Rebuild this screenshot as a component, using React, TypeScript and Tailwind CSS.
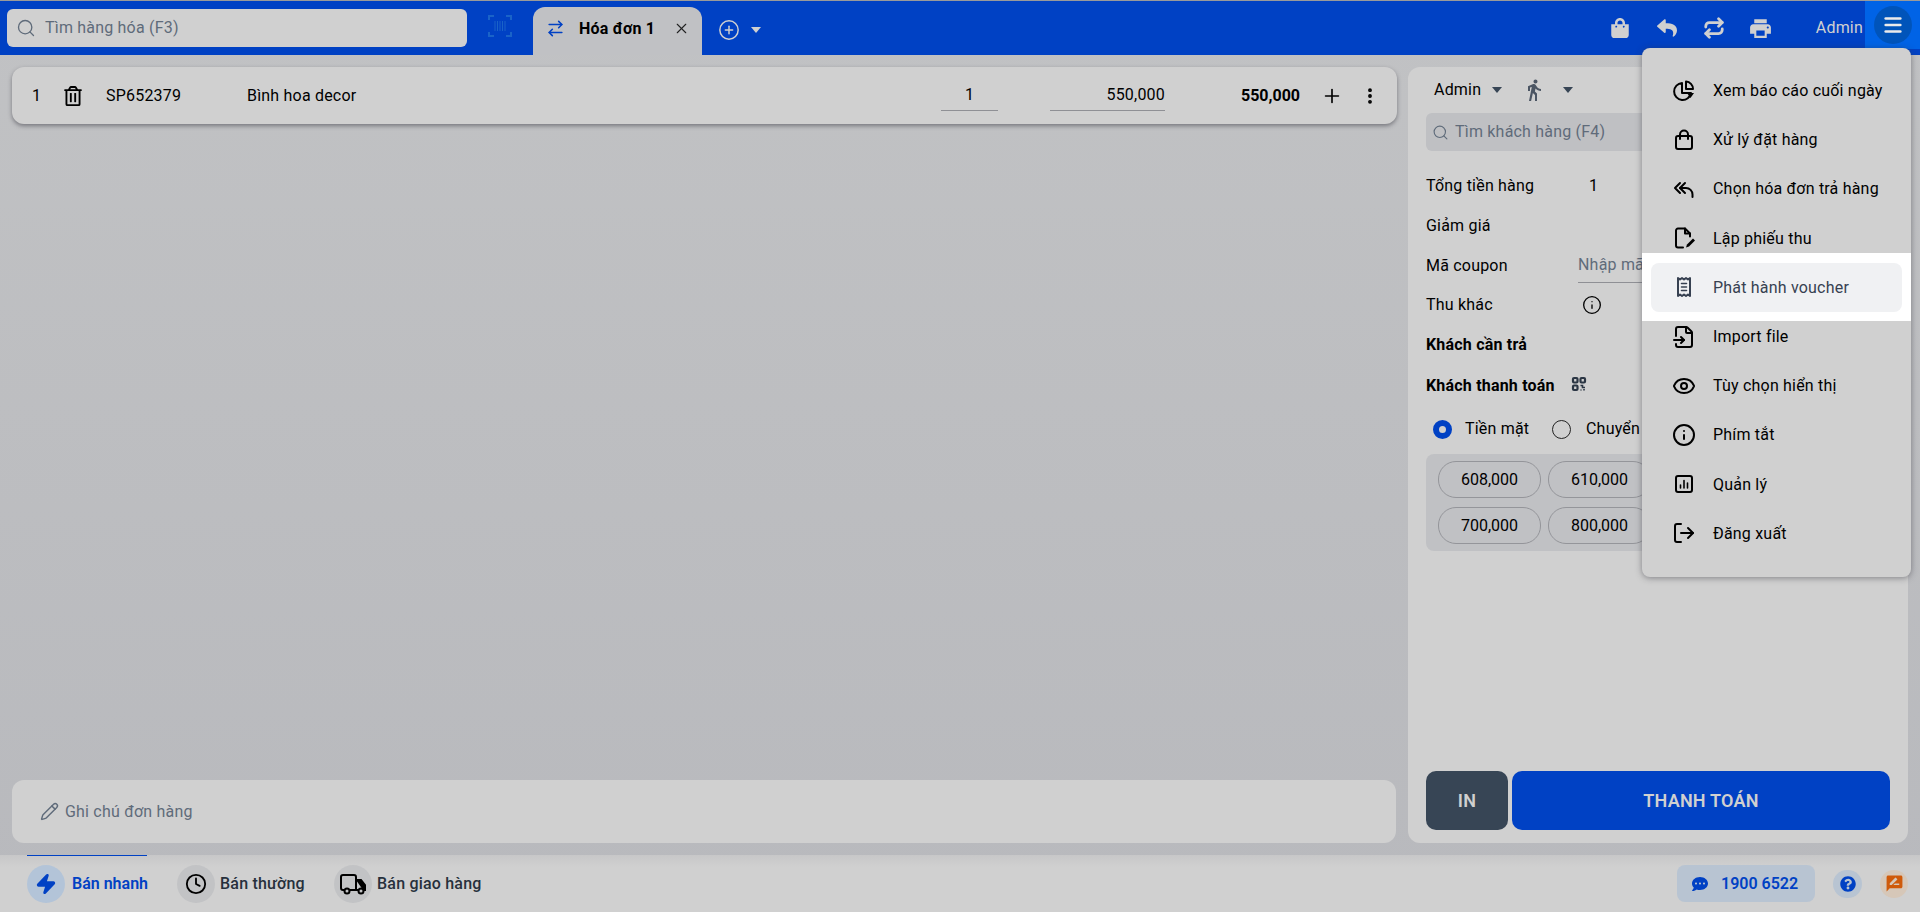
import {
  ArrowLeftRight,
  CirclePlus,
  Clock,
  EllipsisVertical,
  Eye,
  FileInput,
  Info,
  LogOut,
  Menu,
  Pencil,
  Plus,
  Repeat,
  Search,
  X,
  Zap,
} from "lucide-react";
import { FaCommentDots, FaQuestionCircle, FaRegTrashAlt, FaReply, FaShoppingBag } from "react-icons/fa";
import { MdDirectionsWalk, MdPrint, MdRateReview } from "react-icons/md";

const Caret = ({ className = "" }: { className?: string }) => (
  <span className={`inline-block w-0 h-0 border-x-[5px] border-x-transparent border-t-[6px] ${className}`} />
);

const Glyph = ({ children, size = 24 }: { children: React.ReactNode; size?: number }) => (
  <svg width={size} height={size} viewBox="0 0 24 24" fill="none" stroke="currentColor" strokeWidth="2" strokeLinecap="round" strokeLinejoin="round">
    {children}
  </svg>
);

const menuItems = [
  {
    label: "Xem báo cáo cuối ngày",
    icon: (
      <Glyph>
        <path d="M10 4a8.5 8.5 0 1 0 9 10h-9z" />
        <path d="M14 2.5a7.5 7.5 0 0 1 7 7.5h-7z" />
        <path d="M15 14h7l-3.5 5z" fill="currentColor" stroke="none" />
      </Glyph>
    ),
  },
  {
    label: "Xử lý đặt hàng",
    icon: (
      <Glyph>
        <rect x="4" y="8" width="16" height="13" rx="2" />
        <path d="M8 11V6.5a4 4 0 0 1 8 0V11" />
      </Glyph>
    ),
  },
  {
    label: "Chọn hóa đơn trả hàng",
    icon: (
      <Glyph>
        <path d="M8 6l-5 5 5 5M13 6l-5 5 5 5" />
        <path d="M8 11h6a6.5 6.5 0 0 1 6.5 6.5V20" />
      </Glyph>
    ),
  },
  {
    label: "Lập phiếu thu",
    icon: (
      <Glyph>
        <path d="M11 21.5H6a2 2 0 0 1-2-2v-15a2 2 0 0 1 2-2h7l5 5v3" />
        <path d="M13 2.5v5h5" />
        <path d="M14 21.5l1-3 6-6 2 2-6 6z" fill="currentColor" stroke="none" />
      </Glyph>
    ),
  },
  {
    label: "Phát hành voucher",
    active: true,
    icon: (
      <Glyph>
        <path d="M6 3l2 1.5L10 3l2 1.5L14 3l2 1.5L18 3v18l-2-1.5-2 1.5-2-1.5-2 1.5-2-1.5L6 21z" />
        <path d="M9.5 8.5h5M9.5 12h5M9.5 15.5h5" strokeWidth="1.6" />
      </Glyph>
    ),
  },
  { label: "Import file", icon: <FileInput size={24} strokeWidth={2} /> },
  { label: "Tùy chọn hiển thị", icon: <Eye size={24} strokeWidth={2} /> },
  { label: "Phím tắt", icon: <Info size={24} strokeWidth={2} /> },
  {
    label: "Quản lý",
    icon: (
      <Glyph>
        <rect x="4" y="4" width="16" height="16" rx="2" />
        <path d="M8.5 16v-3M12 16V8.5M15.5 16v-5" strokeWidth="1.6" />
      </Glyph>
    ),
  },
  { label: "Đăng xuất", icon: <LogOut size={24} strokeWidth={2} /> },
];

function Header() {
  return (
    <header className="h-[55px] shrink-0 flex bg-[#0041c4] border-t border-[#9a9a9a] pl-[7px]">
      <div className="w-[460px] h-[38px] mt-2 rounded-md bg-[#d0d0d0] flex items-center pl-[9px] gap-[9px] text-[#5f6b7a]">
        <Search size={20} strokeWidth={1.6} />
        <span>Tìm hàng hóa (F3)</span>
      </div>
      <div className="ml-[19px] mt-[11px] h-[30px] text-[#1a63c8]">
        <svg width="28" height="28" viewBox="0 0 28 28" fill="none" stroke="currentColor" strokeWidth="2">
          <path d="M3 8V4h5M20 4h5v4M25 20v4h-5M8 24H3v-4" />
          <path d="M9 9v10M11.5 9v10M14 9v10M16.5 9v10M19 9v10" strokeWidth="1" />
        </svg>
      </div>
      <div className="ml-[19px] mt-[6px] w-[169px] h-[48px] bg-[#c0c1c4] rounded-t-xl flex items-center pl-[13px] pb-[5px]">
        <ArrowLeftRight size={19} strokeWidth={2} className="text-[#0041c4] -scale-x-100" />
        <span className="ml-[14px] font-bold text-black">Hóa đơn 1</span>
        <X size={17} strokeWidth={1.5} className="ml-[18px] text-[#222]" />
      </div>
      <div className="ml-[16px] flex items-center h-[54px] pt-[4px] text-[#d0d0d0]">
        <CirclePlus size={22} strokeWidth={1.6} />
        <Caret className="ml-[11px] border-t-[#d0d0d0]" />
      </div>
      <div className="ml-auto flex h-[54px] items-center text-[#d0d0d0]">
        <FaShoppingBag size={20} />
        <FaReply size={20} className="ml-[27px]" />
        <Repeat size={22} strokeWidth={3} className="ml-[26px]" />
        <MdPrint size={25} className="ml-[23px]" />
        <span className="ml-[43px]">Admin</span>
      </div>
      <div className="ml-[2px] w-[55px] h-[48px] bg-[#0063e6] flex items-center justify-center self-start">
        <span className="w-[38px] h-[38px] rounded-full bg-[#0054ba] flex items-center justify-center text-[#ebebeb]">
          <Menu size={22} strokeWidth={2.8} />
        </span>
      </div>
    </header>
  );
}

function CartRow() {
  return (
    <div className="h-[57px] rounded-xl bg-[#d0d0d0] shadow-[0_2px_4px_rgba(60,60,70,0.55)] flex items-center text-black">
      <span className="w-[20px] ml-[20px]">1</span>
      <FaRegTrashAlt size={20} className="ml-[11px]" />
      <span className="w-[141px] ml-[23px]">SP652379</span>
      <span className="w-[694px]">Bình hoa decor</span>
      <div className="w-[57px] h-[32px] text-center leading-[32px] border-b border-[#8f9095] mt-[-1px]">1</div>
      <div className="w-[115px] ml-[52px] h-[32px] text-right leading-[32px] border-b border-[#8f9095] mt-[-1px]">550,000</div>
      <span className="w-[135px] text-right font-bold tracking-normal">550,000</span>
      <Plus size={22} strokeWidth={1.8} className="ml-[21px]" />
      <EllipsisVertical size={20} strokeWidth={2.6} className="ml-[17px]" />
    </div>
  );
}

function SummaryPanel() {
  return (
    <aside className="w-[500px] shrink-0 rounded-xl bg-[#d0d0d0] flex flex-col px-[18px] text-black">
      <div className="h-[46px] flex items-center pl-[8px]">
        <span>Admin</span>
        <Caret className="ml-[11px] border-t-[#374555]" />
        <MdDirectionsWalk size={24} className="ml-[20px] text-[#4b5563]" />
        <Caret className="ml-[17px] border-t-[#374555]" />
      </div>
      <div className="h-[38px] rounded-md bg-[#bfc0c3] flex items-center pl-[6px] gap-[6px] text-[#5f6b7a]">
        <Search size={17} strokeWidth={1.6} />
        <span>Tìm khách hàng (F4)</span>
      </div>
      <div className="mt-[15px] h-[40px] flex items-center">
        <span className="w-[163px]">Tổng tiền hàng</span>
        <span>1</span>
      </div>
      <div className="h-[40px] flex items-center">Giảm giá</div>
      <div className="h-[39px] flex items-center">
        <span className="w-[152px]">Mã coupon</span>
        <span className="h-[32px] w-[200px] leading-[28px] border-b border-[#8f9095] text-[#5f6b7a] mt-[3px]">Nhập mã</span>
      </div>
      <div className="h-[40px] flex items-center">
        <span className="w-[156px]">Thu khác</span>
        <Info size={20} strokeWidth={1.6} />
      </div>
      <div className="h-[40px] flex items-center font-bold">Khách cần trả</div>
      <div className="h-[41px] flex items-center font-bold">
        <span>Khách thanh toán</span>
        <span className="ml-[16px] mt-[-4px]">
          <svg width="16" height="16" viewBox="0 0 16 16" fill="none" stroke="#2b3644" strokeWidth="2.2">
            <rect x="2" y="2" width="4.5" height="4.5" rx="1" />
            <rect x="9.5" y="2" width="4.5" height="4.5" rx="1" />
            <rect x="2" y="9.5" width="4.5" height="4.5" rx="1" />
            <path d="M9.5 9.5h2v2h2.5M9.5 14h1M13 13v1.5" strokeWidth="1.6" />
          </svg>
        </span>
      </div>
      <div className="mt-[2px] h-[42px] flex items-center pl-[7px]">
        <span className="w-[19px] h-[19px] rounded-full border-[6px] border-[#0041c4] bg-[#d0d0d0]" />
        <span className="ml-[13px] w-[87px]">Tiền mặt</span>
        <span className="w-[19px] h-[19px] rounded-full border border-[#222]" />
        <span className="ml-[15px]">Chuyển khoản</span>
      </div>
      <div className="mt-[4px] h-[97px] rounded-lg bg-[#c0c1c4] grid grid-cols-[103px_103px] gap-x-[7px] gap-y-[9px] px-[12px] py-[7px] tracking-normal">
        {["608,000", "610,000", "700,000", "800,000"].map((v) => (
          <span key={v} className="rounded-[18px] h-[37px] border border-[#94959a] flex items-center justify-center">{v}</span>
        ))}
      </div>
      <div className="mt-auto mb-[13px] flex gap-[4px] h-[59px] text-[#d0d0d0] font-semibold text-[18px]">
        <button className="w-[82px] rounded-[10px] bg-[#374555]">IN</button>
        <button className="flex-1 rounded-[10px] bg-[#0041c4]">THANH TOÁN</button>
      </div>
    </aside>
  );
}

function Footer() {
  const tab = "w-[38px] h-[38px] shrink-0 rounded-full flex items-center justify-center";
  return (
    <footer className="h-[57px] shrink-0 bg-[#d0d0d0] bg-gradient-to-b from-[#c7c7c8] to-[#d0d0d0] to-[12px] flex items-center font-medium whitespace-nowrap pl-[27px] pr-[12px]">
      <div className="relative w-[120px] flex items-center gap-[7px] text-[#0041c4] h-full">
        <span className="absolute top-0 left-0 w-[120px] h-px bg-[#0041c4]" />
        <span className={`${tab} bg-[#b3c4d8]`}>
          <Zap size={22} fill="currentColor" />
        </span>
        <span className="font-semibold tracking-normal">Bán nhanh</span>
      </div>
      <div className="ml-[30px] w-[127px] flex items-center gap-[5px] text-[#27303c]">
        <span className={`${tab} bg-[#c2c3c5] text-black`}><Clock size={22} strokeWidth={2} /></span>
        <span>Bán thường</span>
      </div>
      <div className="ml-[30px] flex items-center gap-[5px] text-[#27303c]">
        <span className={`${tab} bg-[#c2c3c5] text-black`}>
          <svg width="26" height="22" viewBox="0 0 26 22" fill="none" stroke="currentColor" strokeWidth="2">
            <path d="M5 17H3a2 2 0 0 1-2-2V4a2 2 0 0 1 2-2h11a2 2 0 0 1 2 2v13H9" />
            <path d="M16 7h5l4 5v5h-2M17 17h2" fill="currentColor" />
            <circle cx="7" cy="18" r="2.5" />
            <circle cx="21" cy="18" r="2.5" />
          </svg>
        </span>
        <span>Bán giao hàng</span>
      </div>
      <div className="ml-auto flex items-center text-[#0041c4]">
        <div className="w-[138px] h-[37px] rounded-lg bg-[#b8c4d2] flex items-center pl-[15px] gap-[13px]">
          <FaCommentDots size={16} />
          <span className="font-semibold tracking-normal">1900 6522</span>
        </div>
        <span className="ml-[18px] w-[29px] h-[28px] rounded-full bg-[#b8c4d2] flex items-center justify-center">
          <FaQuestionCircle size={16} />
        </span>
        <span className="ml-[18px] w-[28px] h-[28px] rounded-full bg-[#d6c7b8] flex items-center justify-center text-[#cf5a0a]">
          <MdRateReview size={19} />
        </span>
      </div>
    </footer>
  );
}

function ActionMenu() {
  return (
    <div className="absolute top-[48px] left-[1642px] w-[269px] rounded-lg bg-[#d0d0d0] shadow-[0_1px_6px_rgba(50,50,60,0.5)] pt-[18px] pb-[19px] px-[9px]">
      {menuItems.map((item) => (
        <div key={item.label} className="relative h-[49.2px]">
          {item.active && <span className="absolute -inset-x-[9px] -top-[10px] -bottom-[9px] bg-white" />}
          <div className={`relative h-full flex items-center rounded-lg pl-[21px] ${item.active ? "bg-[#f0f1f3] text-[#374151]" : "text-black"}`}>
            <span className="w-[24px] h-[24px] shrink-0">{item.icon}</span>
            <span className="ml-[17px] pt-px">{item.label}</span>
          </div>
        </div>
      ))}
    </div>
  );
}

export default function App() {
  return (
    <div className="relative h-[912px] w-[1920px] overflow-hidden flex flex-col bg-[#bcbdc1] bg-gradient-to-b from-[#c1c2c4] to-[#b8b9bd] font-['Roboto',sans-serif] text-[16px] tracking-[0.2px]">
      <Header />
      <main className="flex-1 min-h-0 flex gap-[11px] py-[12px] px-[12px]">
        <div className="flex-1 flex flex-col justify-between">
          <CartRow />
          <div className="h-[63px] mr-px rounded-xl bg-[#d0d0d0] flex items-center pl-[28px] gap-[6px] text-[#5f6b7a]">
            <Pencil size={19} strokeWidth={1.8} />
            <span>Ghi chú đơn hàng</span>
          </div>
        </div>
        <SummaryPanel />
      </main>
      <Footer />
      <ActionMenu />
    </div>
  );
}
